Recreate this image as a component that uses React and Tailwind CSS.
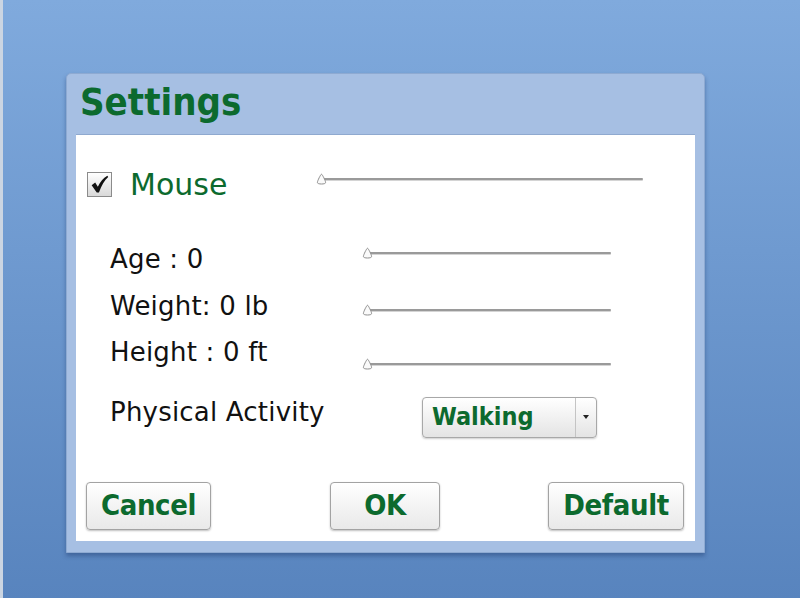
import React, { useState } from "react";

const green = "text-[#0c6a2e]";

// little cone-shaped thumb + grey rail
function Slider({ width, className = "" }) {
  return (
    <div className={`relative h-[12px] ${className}`} style={{ width }}>
      <div className="mt-[5px] ml-[5px] h-[2px] rounded-full bg-[#9a9a9a] shadow-[0_1px_0_#d4d4d4]" />
      <svg
        className="absolute left-0 top-0"
        width="11"
        height="12"
        viewBox="0 0 11 12"
      >
        <path
          d="M5.5 1.2 C6.3 1.2 9.6 8 9.6 9.4 C9.6 10.6 7.8 11 5.5 11 C3.2 11 1.4 10.6 1.4 9.4 C1.4 8 4.7 1.2 5.5 1.2 Z"
          fill="#fafafa"
          stroke="#8d8d8d"
          strokeWidth="1"
        />
      </svg>
    </div>
  );
}

function Button({ children, width, className = "" }) {
  return (
    <button
      type="button"
      className={`h-[48px] rounded-[4px] border border-[#a3a3a3] bg-gradient-to-b from-white to-[#e9e9e9] shadow-[0_1px_2px_rgba(0,0,0,0.25)] font-['DejaVu_Sans_Condensed','DejaVu_Sans',sans-serif] text-[29px] font-bold tracking-[-0.4px] ${green} ${className}`}
      style={{ width }}
    >
      {children}
    </button>
  );
}

export default function App() {
  const [mouse, setMouse] = useState(true);

  const rows = [
    { label: "Age : 0", slider: "mt-[11px]" },
    { label: "Weight: 0 lb", slider: "mt-[21px]" },
    { label: "Height : 0 ft", slider: "mt-[29px]" },
  ];

  return (
    <div className="flex h-[598px] w-[800px] overflow-hidden bg-gradient-to-b from-[#80aadd] to-[#5884be] font-['DejaVu_Sans',sans-serif]">
      <div className="w-[3px] bg-[#cbd5e2]" />

      <div className="pl-[63px] pt-[73px]">
        {/* dialog */}
        <div className="h-[480px] w-[639px] rounded-t-[5px] border border-[#8eaad2] bg-[#a6bfe3] shadow-[0_3px_4px_rgba(30,60,110,0.45)]">
          <div className="h-[60px] pl-[13px]">
            <h1 className={`font-['DejaVu_Sans_Condensed','DejaVu_Sans',sans-serif] text-[38px] font-bold leading-[56px] ${green}`}>
              Settings
            </h1>
          </div>

          {/* white panel */}
          <div className="mx-[9px] h-[407px] border-t border-[#8fa9cf] bg-white">
            {/* Mouse row */}
            <div className="mt-[37px] flex h-[26px] items-start">
              <button
                type="button"
                onClick={() => setMouse(!mouse)}
                className="ml-[11px] flex h-[25px] w-[25px] items-center justify-center border border-[#8b8b8b] bg-gradient-to-b from-white to-[#d9d9d9]"
              >
                {mouse && (
                  <svg width="21" height="21" viewBox="0 0 19 19">
                    <path
                      d="M2.4 10.2 L5.6 7.8 L8 11.6 C10.2 7.2 12.8 3.8 16.6 1.6 L17.4 2.8 C14 5.8 11.4 10.2 9 16.8 L7 16.8 Z"
                      fill="#111"
                    />
                  </svg>
                )}
              </button>
              <span className={`ml-[18px] w-[186px] text-[30px] leading-[26px] ${green}`}>
                Mouse
              </span>
              <Slider width={327} className="mt-[1px]" />
            </div>

            {/* number rows */}
            <div className="mt-[38px] pl-[34px]">
              {rows.map((r) => (
                <div key={r.label} className="flex h-[46.5px] items-start">
                  <span className="w-[252px] text-[26px] leading-[46px] tracking-[0.2px] text-[#111]">
                    {r.label}
                  </span>
                  <Slider width={249} className={r.slider} />
                </div>
              ))}

              <div className="mt-[13px] flex h-[50px] items-start">
                <span className="w-[312px] text-[26px] leading-[46px] tracking-[0.2px] text-[#111]">
                  Physical Activity
                </span>
                <div className="mt-[8px] flex h-[41px] w-[175px] items-stretch rounded-[4px] border border-[#a8a8a8] bg-gradient-to-b from-white to-[#e4e4e4] shadow-[0_1px_2px_rgba(0,0,0,0.2)]">
                  <span className={`flex flex-1 items-center pl-[9px] font-['DejaVu_Sans_Condensed','DejaVu_Sans',sans-serif] text-[25px] font-bold ${green}`}>
                    Walking
                  </span>
                  <span className="flex w-[21px] items-center justify-center border-l border-[#c4c4c4]">
                    <svg width="6" height="4" viewBox="0 0 6 4">
                      <path d="M0 0 H6 L3 4 Z" fill="#222" />
                    </svg>
                  </span>
                </div>
              </div>
            </div>

            {/* buttons */}
            <div className="mt-[43px] flex">
              <Button width={125} className="ml-[10px]">Cancel</Button>
              <Button width={110} className="ml-[119px]">OK</Button>
              <Button width={136} className="ml-[108px]">Default</Button>
            </div>
          </div>
        </div>
      </div>
    </div>
  );
}
